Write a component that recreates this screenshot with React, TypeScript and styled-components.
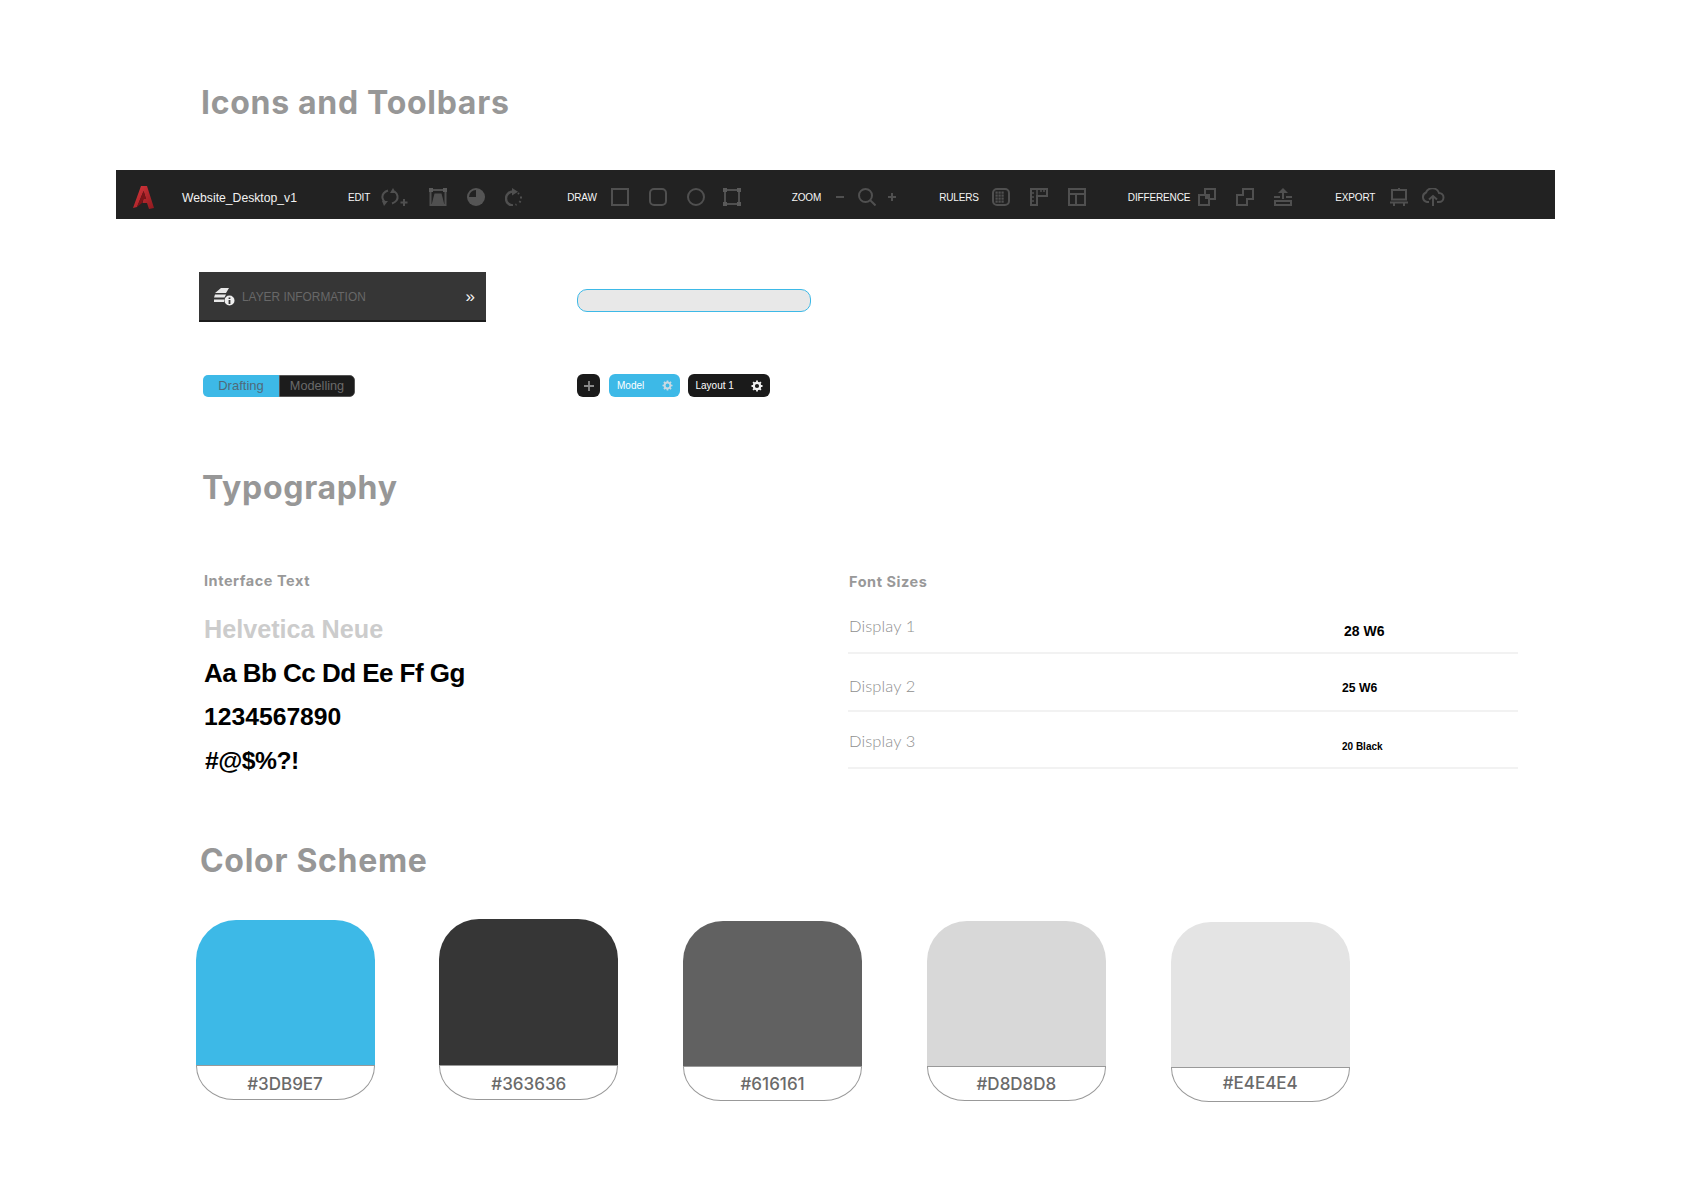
import React from "react";
import styled, { createGlobalStyle } from "styled-components";

const Global = createGlobalStyle`
  html, body { margin: 0; padding: 0; background: #fff; }
  body { font-family: "Liberation Sans", Arial, sans-serif; }
  * { box-sizing: border-box; }
`;

const Page = styled.div`
  width: 1684px;
  height: 1191px;
  padding-top: 83px;
  overflow: hidden;
`;

const Title = styled.h1<{ $x: number; $top: number }>`
  margin: ${(p) => p.$top}px 0 0 ${(p) => p.$x}px;
  font: 700 32px/40px Inter, "Open Sans", sans-serif;
  letter-spacing: 0.7px;
  color: #979797;
  white-space: nowrap;
`;

const Toolbar = styled.div`
  margin: 47px 0 0 116px;
  width: 1439px;
  height: 49px;
  padding: 5px 0 0 17px;
  background: #222222;
  display: flex;
  align-items: center;
`;

const Logo = styled.svg`
  width: 21px;
  height: 23px;
  flex: none;
`;

const FileName = styled.span`
  margin: 1px 0 0 28px;
  width: 115px;
  font-size: 12.2px;
  color: #f2f2f2;
  white-space: nowrap;
  flex: none;
`;

const ToolGroup = styled.div<{ $left: number; $gap?: number }>`
  margin-left: ${(p) => p.$left}px;
  display: flex;
  align-items: center;
  gap: ${(p) => p.$gap ?? 20}px;
  flex: none;
`;

const ToolLabel = styled.span<{ $after: number }>`
  font-size: 10px;
  letter-spacing: -0.15px;
  color: #f6f6f6;
  margin-right: ${(p) => p.$after - 20}px;
  white-space: nowrap;
`;

const ToolIcon = styled.svg<{ $w?: number; $ml?: number }>`
  width: ${(p) => p.$w ?? 18}px;
  height: 18px;
  margin-left: ${(p) => p.$ml ?? 0}px;
  flex: none;
  fill: none;
  stroke: #505050;
  stroke-width: 2;
`;

const PanelRow = styled.div`
  margin: 53px 0 0 199px;
  display: flex;
  align-items: flex-start;
`;

const LayerPanel = styled.div`
  width: 287px;
  height: 50px;
  padding: 2px 11px 0 15px;
  background: #363636;
  border-bottom: 2px solid #1c1c1c;
  display: flex;
  align-items: center;
`;

const LayerIcon = styled.svg`
  width: 21px;
  height: 18px;
  flex: none;
`;

const LayerLabel = styled.span`
  margin-left: 7px;
  font-size: 11.9px;
  color: #686868;
  white-space: nowrap;
  flex: 1;
`;

const Chevron = styled.span`
  font-size: 17px;
  line-height: 17px;
  color: #f4f4f4;
  margin-top: -2px;
`;

const SearchField = styled.div`
  margin: 17px 0 0 91px;
  width: 234px;
  height: 23px;
  border-radius: 10px;
  border: 1px solid #3db9e7;
  background: #e8e8e8;
`;

const TabRow = styled.div`
  margin: 52px 0 0 203px;
  display: flex;
  align-items: flex-start;
  height: 23px;
`;

const Segmented = styled.div`
  margin-top: 1px;
  width: 152px;
  height: 22px;
  border-radius: 5px;
  overflow: hidden;
  display: flex;
`;

const Segment = styled.div<{ $on?: boolean }>`
  width: 76px;
  padding-bottom: ${(p) => (p.$on ? 1 : 0)}px;
  display: flex;
  align-items: center;
  justify-content: center;
  font-size: ${(p) => (p.$on ? 13 : 12.7)}px;
  color: ${(p) => (p.$on ? "#50697a" : "#6a6a6a")};
  background: ${(p) => (p.$on ? "#3db9e7" : "#1c1c1c")};
  border: ${(p) => (p.$on ? "none" : "1px solid #555")};
  border-radius: ${(p) => (p.$on ? 0 : "0 5px 5px 0")};
`;

const SheetTabs = styled.div`
  margin-left: 222px;
  display: flex;
  gap: 7.5px;
`;

const AddTab = styled.div`
  width: 23px;
  height: 23px;
  margin-right: 1.5px;
  border-radius: 6px;
  background: #1a1a1a;
  display: flex;
  align-items: center;
  justify-content: center;
`;

const SheetTab = styled.div<{ $w: number; $on?: boolean }>`
  width: ${(p) => p.$w}px;
  height: 23px;
  padding: 0 7px 0 8px;
  border-radius: 6px;
  background: ${(p) => (p.$on ? "#3db9e7" : "#1a1a1a")};
  color: #fff;
  font-size: 10px;
  display: flex;
  align-items: center;
  justify-content: space-between;
`;

const Columns = styled.div`
  margin: 63px 0 0 204px;
  display: flex;
  align-items: flex-start;
`;

const LeftCol = styled.div`
  width: 644px;
`;

const RightCol = styled.div`
  width: 670px;
`;

const SubHead = styled.div<{ $top?: number; $x?: number }>`
  margin: ${(p) => p.$top ?? 0}px 0 0 ${(p) => p.$x ?? 0}px;
  font: 700 14.5px/20px Inter, "Open Sans", sans-serif;
  letter-spacing: 0.54px;
  color: #999;
`;

const Specimen = styled.div<{ $c?: string; $s?: number; $ls?: number; $x?: number }>`
  margin-left: ${(p) => p.$x ?? 0}px;
  font-weight: 700;
  font-size: ${(p) => p.$s ?? 26}px;
  letter-spacing: ${(p) => p.$ls ?? 0}px;
  line-height: 44px;
  color: ${(p) => p.$c ?? "#000"};
  white-space: nowrap;
`;

const SpecimenList = styled.div`
  margin-top: 15.5px;
`;

const SizeRow = styled.div<{ $h: number }>`
  height: ${(p) => p.$h}px;
  border-bottom: 2px solid #f2f2f2;
  display: flex;
  align-items: flex-start;
`;

const SizeName = styled.div<{ $top: number }>`
  margin: ${(p) => p.$top}px 0 0 1px;
  width: 494px;
  font: 300 16.5px/20px Lato, "Open Sans", sans-serif;
  letter-spacing: 0.1px;
  color: #8f8f8f;
`;

const SizeValue = styled.div<{ $top: number; $s: number; $x?: number }>`
  margin: ${(p) => p.$top}px 0 0 ${(p) => p.$x ?? 0}px;
  font-weight: 700;
  font-size: ${(p) => p.$s}px;
  line-height: 20px;
  color: #000;
  white-space: nowrap;
`;

const Swatches = styled.div`
  margin: 38px 0 0 195.5px;
  display: flex;
  align-items: flex-start;
  gap: 64.8px;
`;

const Swatch = styled.div<{ $dy: number }>`
  width: 179px;
  margin-top: ${(p) => p.$dy}px;
`;

const Chip = styled.div<{ $c: string; $h: number }>`
  height: ${(p) => p.$h}px;
  border-radius: 40px 40px 0 0;
  background: ${(p) => p.$c};
`;

const ChipLabel = styled.div<{ $lift: number }>`
  height: 35px;
  border: 1px solid #999;
  border-radius: 0 0 38px 38px / 0 0 34px 34px;
  font: 500 17px/${(p) => 36 - p.$lift * 2}px Inter, "Open Sans", sans-serif;
  color: #6a6a6a;
  text-align: center;
`;

const Gear = ({ c, size }: { c: string; size: number }) => (
  <svg width={size} height={size} viewBox="0 0 12 12">
    <circle cx="6" cy="6" r="3.2" fill="none" stroke={c} strokeWidth="2.2" />
    <path d="M6 .5v2M6 9.5v2M.5 6h2M9.5 6h2M2.1 2.1l1.4 1.4M8.5 8.5l1.4 1.4M2.1 9.9l1.4-1.4M8.5 3.5l1.4-1.4" stroke={c} strokeWidth="1.8" />
  </svg>
);

const swatches = [
  { c: "#3DB9E7", dy: 1, h: 145, lift: 0 },
  { c: "#363636", dy: 0, h: 146, lift: 0 },
  { c: "#616161", dy: 2, h: 145, lift: 1 },
  { c: "#D8D8D8", dy: 2, h: 145, lift: 1 },
  { c: "#E4E4E4", dy: 3, h: 145, lift: 3 },
];

const gridDots = [4.5, 7.5, 10.5, 13.5].flatMap((y) => [4.5, 7.5, 10.5].map((x) => [x, y]));

export default function App() {
  return (
    <Page>
      <Global />
      <Title $x={201} $top={0}>Icons and Toolbars</Title>
      <Toolbar>
        <Logo viewBox="0 0 21 23">
          <defs>
            <linearGradient id="lg" x1="0" y1="0" x2="1" y2="1">
              <stop offset="0" stopColor="#d9363c" />
              <stop offset="1" stopColor="#8f1a1f" />
            </linearGradient>
          </defs>
          <path d="M8 0h6l7 22-5 1-2-6H9.500l1-4H13l-2.400-8L4 21l-4 1z" fill="url(#lg)" />
          <path d="M10.600 5 13 13h-2.500L9 17l-5 4z" fill="#7c1317" />
        </Logo>
        <FileName>Website_Desktop_v1</FileName>
        <ToolGroup $left={51}>
          <ToolLabel $after={11}>EDIT</ToolLabel>
          <ToolIcon $w={28} viewBox="0 0 28 18">
            <path d="M7 2.500C3 4 1 7 1.500 10c.3 2 1.500 3.500 3 4.500" />
            <path d="M3 18l4-5H1z" fill="#505050" stroke="none" />
            <path d="M11 15.500c4-1.500 6-4.500 5.500-7.500-.3-2-1.500-3.500-3-4.500" />
            <path d="M12 0l-3 5h6z" fill="#505050" stroke="none" />
            <path d="M23 11v7M19.500 14.500h7" />
          </ToolIcon>
          <ToolIcon viewBox="0 0 18 18">
            <rect x="1.500" y="2" width="15" height="15" />
            <path d="M5.500 5.500h7l3 11.500h-13z" fill="#505050" stroke="none" />
            <path d="M0 0h4v4H0zM14 0h4v4h-4z" fill="#5a5a5a" stroke="none" />
          </ToolIcon>
          <ToolIcon viewBox="0 0 18 18">
            <circle cx="9" cy="9" r="9" fill="#555" stroke="none" />
            <path d="M9 9V2a7 7 0 0 0-7 7z" fill="#222" stroke="none" />
          </ToolIcon>
          <ToolIcon viewBox="0 0 18 18">
            <path d="M8 3.500a7 7 0 0 0 0 14" strokeWidth="2.400" />
            <path d="M7 0l6 3.700L7 7.500z" fill="#505050" stroke="none" />
            <path d="M13 5l1 1M16 8.500v2M15.500 13l-1 1.500M11.500 16.300l-1 .5" />
          </ToolIcon>
        </ToolGroup>
        <ToolGroup $left={44}>
          <ToolLabel $after={14}>DRAW</ToolLabel>
          <ToolIcon viewBox="0 0 18 18"><rect x="1" y="1" width="16" height="16" /></ToolIcon>
          <ToolIcon viewBox="0 0 18 18"><rect x="1" y="1" width="16" height="16" rx="4" /></ToolIcon>
          <ToolIcon viewBox="0 0 18 18"><circle cx="9" cy="9" r="8" /></ToolIcon>
          <ToolIcon $ml={-2} viewBox="0 0 18 18">
            <rect x="2" y="2" width="14" height="14" />
            <path d="M0 0h4v4H0zM14 0h4v4h-4zM0 14h4v4H0zM14 14h4v4h-4z" fill="#5a5a5a" stroke="none" />
          </ToolIcon>
        </ToolGroup>
        <ToolGroup $left={51} $gap={14}>
          <ToolLabel $after={21}>ZOOM</ToolLabel>
          <ToolIcon $w={8} viewBox="0 0 8 18"><path d="M0 9h8" /></ToolIcon>
          <ToolIcon viewBox="0 0 18 18"><circle cx="7.500" cy="7.500" r="6.500" /><path d="M12 12l5.500 5.500" /></ToolIcon>
          <ToolIcon $w={8} $ml={-2} viewBox="0 0 8 18"><path d="M0 9h8M4 5v8" /></ToolIcon>
        </ToolGroup>
        <ToolGroup $left={43}>
          <ToolLabel $after={13}>RULERS</ToolLabel>
          <ToolIcon viewBox="0 0 18 18">
            <rect x="1" y="1" width="16" height="16" rx="4" />
            {gridDots.map(([x, y]) => (
              <rect key={`${x}-${y}`} x={x - 1} y={y - 1} width="2.200" height="2.200" fill="#505050" stroke="none" />
            ))}
          </ToolIcon>
          <ToolIcon viewBox="0 0 18 18">
            <path d="M1 1h16v7H7v9H1z" />
            <path d="M7 1v7M11 1v3M14 1v3M1 5h3M1 9h3M1 13h3" strokeWidth="1.500" />
          </ToolIcon>
          <ToolIcon viewBox="0 0 18 18">
            <rect x="1" y="1" width="16" height="16" />
            <path d="M1 6h16M8 6v11" />
          </ToolIcon>
        </ToolGroup>
        <ToolGroup $left={42}>
          <ToolLabel $after={8}>DIFFERENCE</ToolLabel>
          <ToolIcon viewBox="0 0 18 18">
            <path d="M7 7V1h10v10h-6M1 7h10v10H1z" />
            <rect x="7" y="7" width="4" height="4" fill="#505050" stroke="none" />
          </ToolIcon>
          <ToolIcon viewBox="0 0 18 18">
            <path d="M7 7V1h10v10h-6v6H1V7z" />
          </ToolIcon>
          <ToolIcon viewBox="0 0 18 18">
            <path d="M9 0l5 5H4z" fill="#505050" stroke="none" />
            <path d="M9 4v7M0 9h6M12 9h6M1 13h16v4H1z" />
          </ToolIcon>
        </ToolGroup>
        <ToolGroup $left={43} $gap={13}>
          <ToolLabel $after={22}>EXPORT</ToolLabel>
          <ToolIcon viewBox="0 0 18 18">
            <rect x="2" y="2" width="14" height="9.500" />
            <path d="M9 0v2M0 14.500h18M4 15v3M14 15v3" />
          </ToolIcon>
          <ToolIcon $w={24} viewBox="0 0 24 18" strokeWidth="1.500">
            <path d="M8 14H6a5 5 0 0 1-1-9.500A7 7 0 0 1 18 5a4.500 4.500 0 0 1 0 9h-2" />
            <path d="M12 18V8M8 11.500 12 8l4 3.500" />
          </ToolIcon>
        </ToolGroup>
      </Toolbar>

      <PanelRow>
        <LayerPanel>
          <LayerIcon viewBox="0 0 21 18">
            <path d="M7 0h8l-3 5H1zM1 6.500h11l-1.500 3H0zM0 11.500h10v2.500H0z" fill="#e8e8e8" />
            <circle cx="15.500" cy="12.500" r="5" fill="#efefef" />
            <path d="M15.500 9.500v1.500M15.500 12v4" stroke="#363636" strokeWidth="1.800" />
          </LayerIcon>
          <LayerLabel>LAYER INFORMATION</LayerLabel>
          <Chevron>»</Chevron>
        </LayerPanel>
        <SearchField />
      </PanelRow>

      <TabRow>
        <Segmented>
          <Segment $on>Drafting</Segment>
          <Segment>Modelling</Segment>
        </Segmented>
        <SheetTabs>
          <AddTab>
            <svg width="12" height="12" viewBox="0 0 12 12"><path d="M6 1v10M1 6h10" stroke="#8a8a8a" strokeWidth="1.800" /></svg>
          </AddTab>
          <SheetTab $w={71} $on>Model<Gear c="#c9d9e2" size={11} /></SheetTab>
          <SheetTab $w={82.500}>Layout 1<Gear c="#f0f0f0" size={12} /></SheetTab>
        </SheetTabs>
      </TabRow>

      <Title $x={202} $top={71}>Typography</Title>

      <Columns>
        <LeftCol>
          <SubHead>Interface Text</SubHead>
          <SpecimenList>
            <Specimen $c="#cccccc" $s={25.200}>Helvetica Neue</Specimen>
            <Specimen $ls={-0.54}>Aa Bb Cc Dd Ee Ff Gg</Specimen>
            <Specimen $s={24.700}>1234567890</Specimen>
            <Specimen $s={24.700} $ls={-0.5} $x={1}>#@$%?!</Specimen>
          </SpecimenList>
        </LeftCol>
        <RightCol>
          <SubHead $top={1} $x={1}>Font Sizes</SubHead>
          <SizeRow $h={62}>
            <SizeName $top={24}>Display 1</SizeName>
            <SizeValue $top={29} $s={14} $x={1}>28 W6</SizeValue>
          </SizeRow>
          <SizeRow $h={58}>
            <SizeName $top={22}>Display 2</SizeName>
            <SizeValue $top={24} $s={12.200} $x={-1}>25 W6</SizeValue>
          </SizeRow>
          <SizeRow $h={57}>
            <SizeName $top={19}>Display 3</SizeName>
            <SizeValue $top={25} $s={10} $x={-1}>20 Black</SizeValue>
          </SizeRow>
        </RightCol>
      </Columns>

      <Title $x={200} $top={58}>Color Scheme</Title>

      <Swatches>
        {swatches.map((s) => (
          <Swatch key={s.c} $dy={s.dy}>
            <Chip $c={s.c} $h={s.h} />
            <ChipLabel $lift={s.lift}>{s.c}</ChipLabel>
          </Swatch>
        ))}
      </Swatches>
    </Page>
  );
}
